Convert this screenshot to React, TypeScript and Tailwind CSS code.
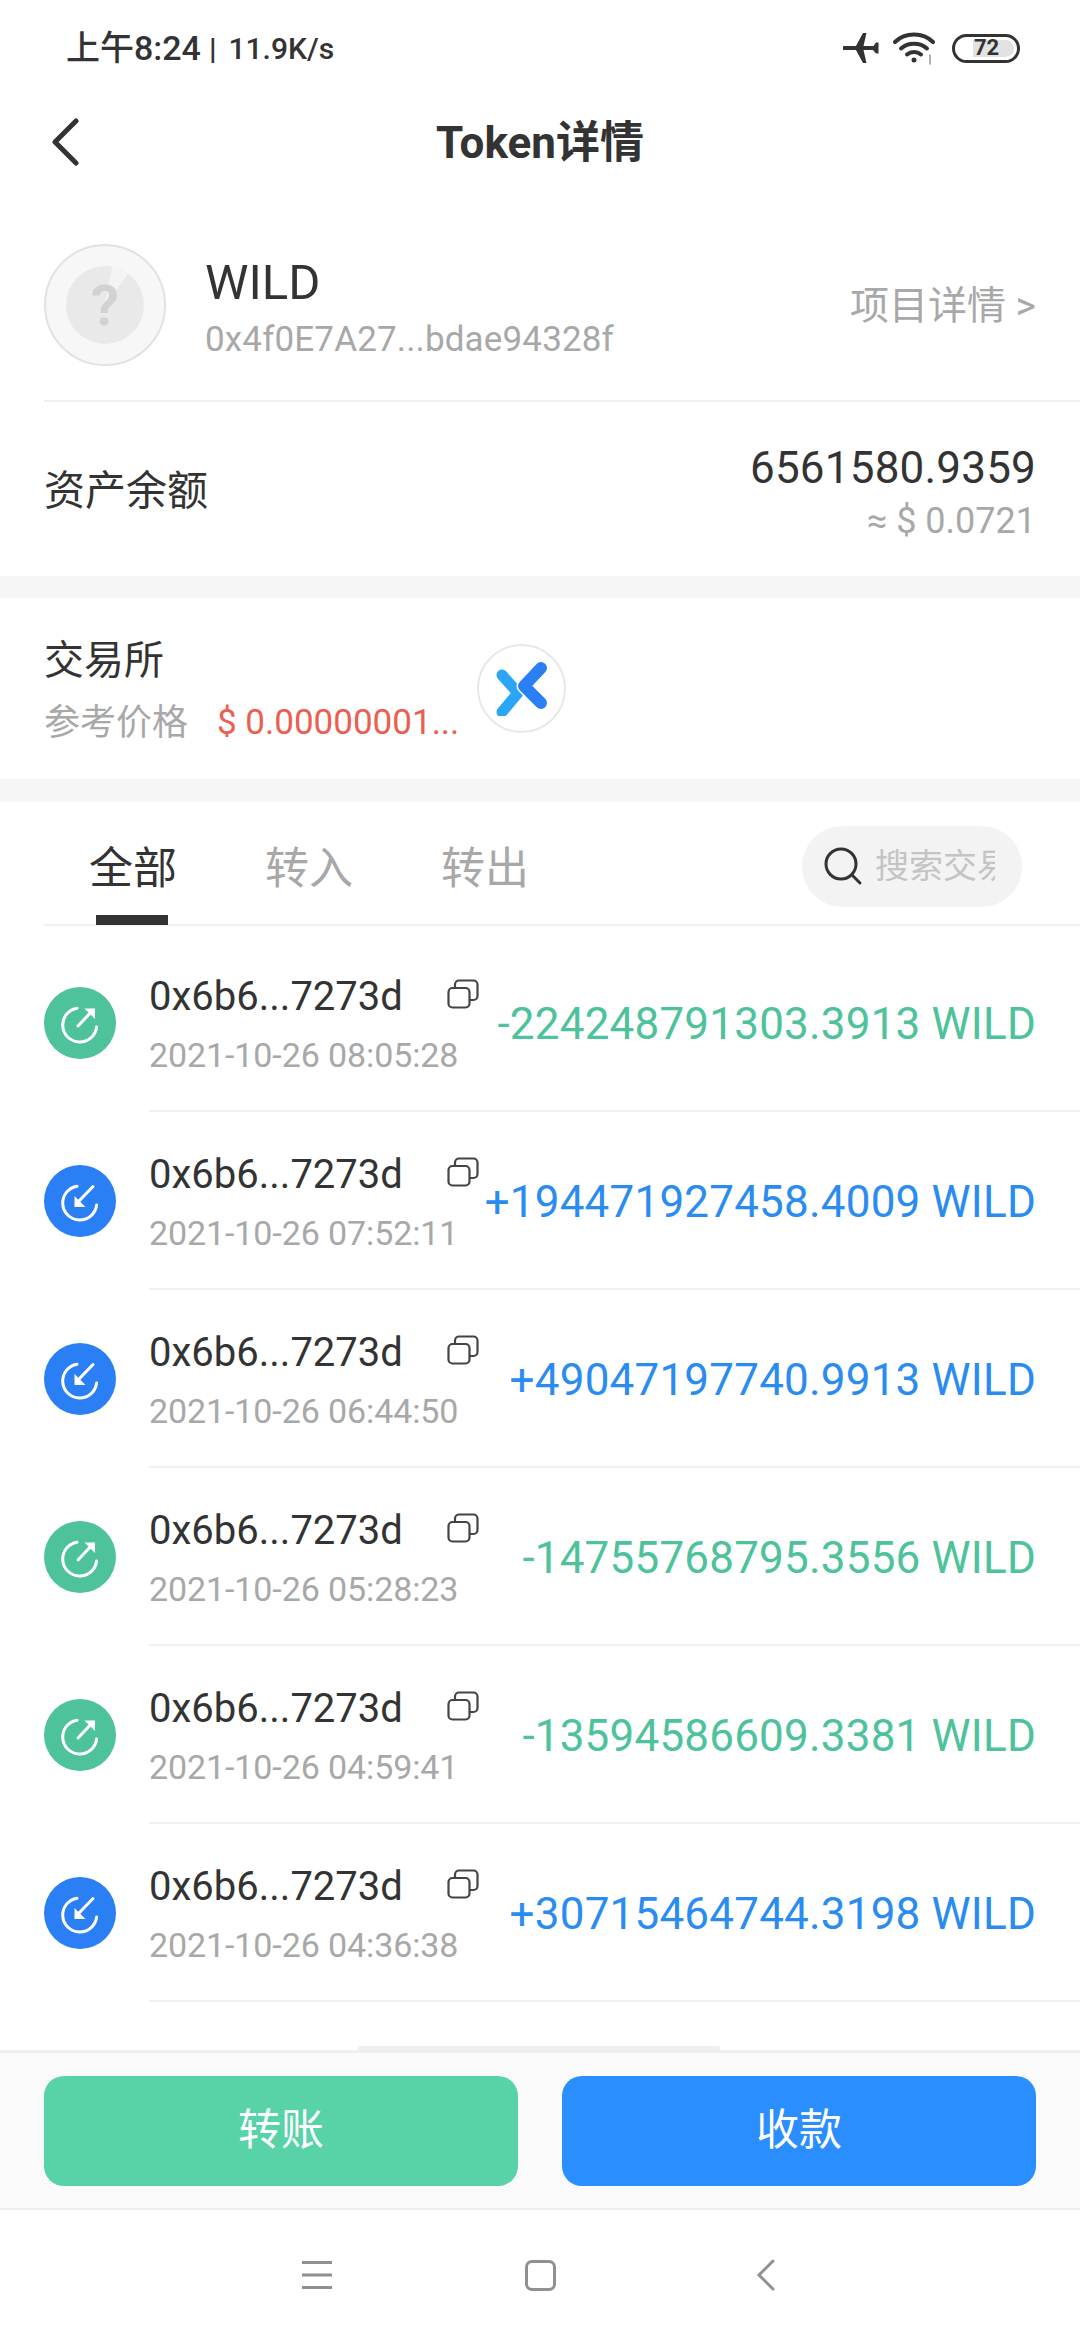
import React from "react";

const rows = [
  { out: true, time: "2021-10-26 08:05:28", amount: "-224248791303.3913 WILD" },
  { out: false, time: "2021-10-26 07:52:11", amount: "+194471927458.4009 WILD" },
  { out: false, time: "2021-10-26 06:44:50", amount: "+49047197740.9913 WILD" },
  { out: true, time: "2021-10-26 05:28:23", amount: "-14755768795.3556 WILD" },
  { out: true, time: "2021-10-26 04:59:41", amount: "-13594586609.3381 WILD" },
  { out: false, time: "2021-10-26 04:36:38", amount: "+30715464744.3198 WILD" },
];

function StatusIcons() {
  return (
    <div className="flex items-center">
      <svg width="36" height="32" viewBox="0 0 36 32" fill="#333">
        <path d="M1 14h12L20 1h3.500l-3 13h10l2.500-3.500h2.500v11h-2.500L30 18H20.500l3 13H20l-7-13H1a2 2 0 0 1 0-4z" />
      </svg>
      <svg className="ml-[14px]" width="44" height="34" viewBox="0 0 44 34" fill="none" stroke="#333" strokeLinecap="round">
        <path d="M2 11C12 1 30 1 40 11" strokeWidth="4" />
        <path d="M8 17.500C15 11 27 11 34 17.500" strokeWidth="4" />
        <path d="M14 23.500C18 20 24 20 28 23.500" strokeWidth="4" />
        <circle cx="21" cy="29" r="2.500" fill="#333" stroke="none" />
        <path d="M37 24v9" stroke="#999" strokeWidth="1.500" />
      </svg>
      <div className="ml-[15px] w-[68px] h-[29px] rounded-full border-[3px] border-[#333] flex items-center overflow-hidden relative bg-white">
        <div className="absolute right-[3px] top-[3px] bottom-[3px] left-[18px] bg-[#e2e2e2] rounded-r-full" />
        <span className="relative pl-[19px] text-[22px] leading-none font-bold text-[#333] font-['Roboto',sans-serif]">72</span>
      </div>
    </div>
  );
}

function TxIcon({ out }: { out: boolean }) {
  return (
    <svg width="72" height="72" viewBox="0 0 72 72" className="shrink-0">
      <circle cx="36" cy="36" r="36" fill={out ? "#4dc29b" : "#2a7ff5"} />
      <path d="M33 21.200A17 17 0 1 0 52.600 40" fill="none" stroke="#fff" strokeWidth="3" strokeLinecap="round" />
      {out ? (
        <>
          <path d="M34 39L49 23" stroke="#fff" strokeWidth="3" strokeLinecap="round" />
          <path d="M40.500 21.500H51V32z" fill="#fff" />
        </>
      ) : (
        <>
          <path d="M49 21.500L35 36" stroke="#fff" strokeWidth="3" strokeLinecap="round" />
          <path d="M30.500 31V42H41.500z" fill="#fff" />
        </>
      )}
    </svg>
  );
}

function CopyIcon() {
  return (
    <svg width="32" height="30" viewBox="0 0 32 30" fill="none" stroke="#444" strokeWidth="2.200" className="shrink-0">
      <rect x="1.500" y="9" width="21" height="19.500" rx="4" />
      <path d="M8 8V5.500a4 4 0 0 1 4-4h14.500a4 4 0 0 1 4 4V17a4 4 0 0 1-4 4H23" />
    </svg>
  );
}

export default function App() {
  return (
    <div className="w-[1080px] h-[2340px] bg-white flex flex-col overflow-hidden text-[#333] font-['Roboto','Noto_Sans_CJK_SC',sans-serif]">
      {/* status bar */}
      <div className="h-[94px] shrink-0 flex items-center justify-between pl-[66px] pr-[60px] pt-[2px]">
        <div className="flex items-center font-medium text-[#333]">
          <span className="text-[34px]">上午8:24</span>
          <span className="text-[30px] font-bold ml-[8px]">|</span>
          <span className="text-[30px] ml-[12px]">11.9K/s</span>
        </div>
        <StatusIcons />
      </div>

      {/* nav */}
      <div className="h-[96px] shrink-0 relative flex items-center justify-center">
        <svg className="absolute left-[50px] top-[24px]" width="30" height="48" viewBox="0 0 30 48" fill="none" stroke="#333" strokeWidth="5" strokeLinecap="round" strokeLinejoin="round">
          <path d="M26 3L5 24L26 45" />
        </svg>
        <h1 className="text-[44px] font-bold text-[#333] pt-[2px]">Token详情</h1>
      </div>

      {/* token */}
      <div className="h-[212px] shrink-0 ml-[44px] border-b-2 border-[#f0f0f0] flex items-center pr-[44px]">
        <svg width="122" height="122" viewBox="0 0 122 122" className="shrink-0 mt-[20px]">
          <circle cx="61" cy="61" r="60" fill="#f7f7f8" stroke="#e2e2e2" strokeWidth="2" />
          <circle cx="61" cy="61" r="39" fill="#e9e9ea" />
          <path d="M61 61L84 30A39 39 0 0 0 68 22.500z" fill="#f4f4f5" />
          <text x="61" y="81" textAnchor="middle" fontSize="56" fontWeight="700" fill="#d2d2d2" fontFamily="Roboto, sans-serif">?</text>
        </svg>
        <div className="ml-[39px] flex flex-col mt-[25px]">
          <span className="text-[49px] leading-[56px] text-[#333]">WILD</span>
          <span className="text-[35px] leading-[42px] mt-[8px] tracking-[0.15px] text-[#a8a8a8]">0x4f0E7A27...bdae94328f</span>
        </div>
        <span className="ml-auto text-[39px] text-[#a8a8a8] mt-[22px]">项目详情 &gt;</span>
      </div>

      {/* balance */}
      <div className="h-[174px] shrink-0 flex items-center justify-between px-[44px] pt-[5px]">
        <span className="text-[41px] text-[#333]">资产余额</span>
        <div className="flex flex-col items-end">
          <span className="text-[44px] leading-[52px] tracking-[0.2px] text-[#333]">6561580.9359</span>
          <span className="text-[36px] leading-[42px] mt-[6px] text-[#a8a8a8]">≈ $ 0.0721</span>
        </div>
      </div>
      <div className="h-[22px] shrink-0 bg-[#f6f6f6]" />

      {/* exchange */}
      <div className="h-[181px] shrink-0 flex items-center px-[44px] pt-[8px]">
        <div className="flex flex-col w-[433px]">
          <span className="text-[40px] leading-[48px] text-[#333]">交易所</span>
          <div className="flex items-center mt-[13px]">
            <span className="text-[36px] leading-[50px] text-[#a8a8a8]">参考价格</span>
            <span className="ml-[29px] text-[35px] leading-[50px] text-[#ea5f52] whitespace-nowrap">$ 0.00000001...</span>
          </div>
        </div>
        <div className="w-[89px] h-[89px] rounded-full border-2 border-[#e8e8e8] flex items-center justify-center -mt-[8px]">
          <svg width="54" height="54" viewBox="0 0 54 54" fill="none" strokeLinecap="round" strokeLinejoin="round">
            <path d="M7 13L23 31L7 50" stroke="#2ba6f7" strokeWidth="11" />
            <path d="M46 6L29 24L46 41" stroke="#fff" strokeWidth="15" />
            <path d="M46 6L29 24L46 41" stroke="#2a7ff5" strokeWidth="12" />
          </svg>
        </div>
      </div>
      <div className="h-[23px] shrink-0 bg-[#f6f6f6]" />

      {/* tabs */}
      <div className="h-[124px] shrink-0 ml-[44px] border-b-2 border-[#f0f0f0] relative flex items-center pr-[58px]">
        <div className="flex gap-[88px] ml-[45px] mt-[12px] text-[44px]">
          <span className="relative text-[#333]">
            全部
            <span className="absolute left-[7px] right-[9px] -bottom-[23px] h-[10px] bg-[#333]" />
          </span>
          <span className="text-[#a8a8a8]">转入</span>
          <span className="text-[#a8a8a8]">转出</span>
        </div>
        <div className="ml-auto mt-[6px] w-[220px] h-[81px] rounded-full bg-[#f3f3f3] flex items-center pl-[21px] overflow-hidden">
          <svg width="40" height="40" viewBox="0 0 40 40" fill="none" stroke="#333" strokeWidth="3" strokeLinecap="round" className="shrink-0">
            <circle cx="18" cy="18" r="15" />
            <path d="M29 29l8 8" />
          </svg>
          <div className="ml-[12px] w-[120px] overflow-hidden whitespace-nowrap text-[34px] text-[#c4c4c4]">搜索交易</div>
        </div>
      </div>

      {/* transactions */}
      <div className="flex-1 flex flex-col pt-[8px] pl-[44px] overflow-hidden">
        {rows.map((r) => (
          <div key={r.time} className="h-[178px] shrink-0 flex items-center">
            <TxIcon out={r.out} />
            <div className="ml-[33px] h-full flex-1 border-b-2 border-[#f0f0f0] flex items-center pr-[44px] min-w-0">
              <div className="flex flex-col w-[330px] shrink-0 mt-[2px]">
                <div className="flex items-start">
                  <span className="text-[40px] leading-[52px] text-[#333]">0x6b6...7273d</span>
                  <div className="ml-auto mt-[8px]">
                    <CopyIcon />
                  </div>
                </div>
                <span className="text-[34px] leading-[40px] mt-[12px] tracking-[-0.1px] text-[#a8a8a8]">{r.time}</span>
              </div>
              <span className={`ml-auto mt-[3px] whitespace-nowrap text-[44px] tracking-[0.2px] ${r.out ? "text-[#4dc29b]" : "text-[#2a8cf0]"}`}>
                {r.amount}
              </span>
            </div>
          </div>
        ))}
        <div className="mt-auto ml-[314px] w-[362px] h-[4px] shrink-0 bg-[#efefef] rounded-t-[2px]" />
      </div>

      {/* actions */}
      <div className="h-[160px] shrink-0 bg-[#fafafa] border-t-[3px] border-b-2 border-[#efefef] flex items-center gap-[44px] px-[44px]">
        <button className="flex-1 h-[110px] rounded-[20px] bg-[#57d3a7] text-white text-[43px]">转账</button>
        <button className="flex-1 h-[110px] rounded-[20px] bg-[#2a8eff] text-white text-[43px]">收款</button>
      </div>

      {/* system nav */}
      <div className="h-[130px] shrink-0 bg-white flex items-center justify-center">
        <div className="flex items-center gap-[193px] -ml-[3px]">
          <svg width="30" height="28" viewBox="0 0 30 28" fill="#909090">
            <rect y="0" width="30" height="3" />
            <rect y="12.500" width="30" height="3" />
            <rect y="25" width="30" height="3" />
          </svg>
          <div className="w-[31px] h-[31px] rounded-[7px] border-[3px] border-[#909090]" />
          <svg className="ml-[7px]" width="20" height="32" viewBox="0 0 20 32" fill="none" stroke="#909090" strokeWidth="3" strokeLinecap="round">
            <path d="M17 2L3 16L17 30" />
          </svg>
        </div>
      </div>
    </div>
  );
}
